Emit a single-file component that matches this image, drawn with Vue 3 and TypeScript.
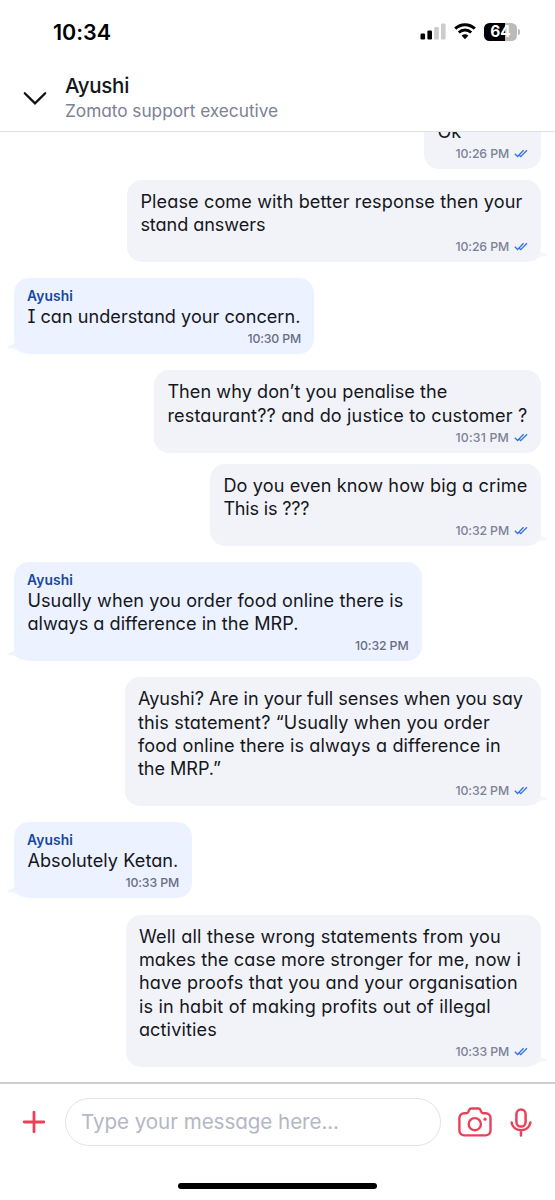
<script setup lang="ts">
import type { Directive } from 'vue'

interface Line { text: string; width: number }
interface Message {
  id: number
  side: 'in' | 'out'
  width: number
  gap: number
  tail: boolean
  time: string
  lines: Line[]
}

const messages: Message[] = [
  { id: 0, side: 'out', width: 117, gap: 0, tail: false, time: '10:26 PM', lines: [{ text: 'Ok', width: 24 }] },
  { id: 1, side: 'out', width: 414, gap: 11, tail: true, time: '10:26 PM', lines: [
    { text: 'Please come with better response then your', width: 382 },
    { text: 'stand answers', width: 125 } ] },
  { id: 2, side: 'in', width: 300, gap: 16, tail: true, time: '10:30 PM', lines: [
    { text: 'I can understand your concern.', width: 273 } ] },
  { id: 3, side: 'out', width: 387, gap: 16.3, tail: false, time: '10:31 PM', lines: [
    { text: 'Then why don’t you penalise the', width: 280 },
    { text: 'restaurant?? and do justice to customer ?', width: 360 } ] },
  { id: 4, side: 'out', width: 331, gap: 11, tail: true, time: '10:32 PM', lines: [
    { text: 'Do you even know how big a crime', width: 304 },
    { text: 'This is ???', width: 86 } ] },
  { id: 5, side: 'in', width: 407.5, gap: 16, tail: true, time: '10:32 PM', lines: [
    { text: 'Usually when you order food online there is', width: 376 },
    { text: 'always a difference in the MRP.', width: 271 } ] },
  { id: 6, side: 'out', width: 416.5, gap: 16.3, tail: true, time: '10:32 PM', lines: [
    { text: 'Ayushi? Are in your full senses when you say', width: 385 },
    { text: 'this statement? “Usually when you order', width: 352 },
    { text: 'food online there is always a difference in', width: 363 },
    { text: 'the MRP.”', width: 83 } ] },
  { id: 7, side: 'in', width: 178, gap: 16, tail: true, time: '10:33 PM', lines: [
    { text: 'Absolutely Ketan.', width: 151 } ] },
  { id: 8, side: 'out', width: 415.5, gap: 16.6, tail: true, time: '10:33 PM', lines: [
    { text: 'Well all these wrong statements from you', width: 362 },
    { text: 'makes the case more stronger for me, now i', width: 382 },
    { text: 'have proofs that you and your organisation', width: 379 },
    { text: 'is in habit of making profits out of illegal', width: 352 },
    { text: 'activities', width: 78 } ] },
]

// Tracks a line of text out or in so that it fills the given width.
const vTrack: Directive<HTMLElement, number> = {
  mounted(el, { value }) {
    const apply = () => {
      el.style.letterSpacing = '0px'
      const count = (el.textContent ?? '').length
      el.style.letterSpacing = `${(value - el.getBoundingClientRect().width) / count}px`
    }
    apply()
    document.fonts.ready.then(apply)
  },
}
</script>

<template>
  <div class="screen">
    <div class="status">
      <span v-track="58" class="clock">10:34</span>
      <div class="indicators">
        <svg width="26" height="17" viewBox="0 0 26 17">
          <rect x="0.5" y="10.5" width="4.6" height="6" rx="1.3" fill="#000" />
          <rect x="7.4" y="7.5" width="4.6" height="9" rx="1.3" fill="#000" />
          <rect x="14.2" y="4" width="4.6" height="12.5" rx="1.3" fill="#ccc" />
          <rect x="21" y="0.5" width="4.6" height="16" rx="1.3" fill="#ccc" />
        </svg>
        <svg class="wifi" width="22" height="17" viewBox="0 0 22 17">
          <g fill="none" stroke="#000" stroke-width="3">
            <path d="M1.2 5.7C6.8 .4 15.2 .4 20.8 5.7" />
            <path d="M4.8 9.5c3.5-3.3 8.9-3.3 12.4 0" />
          </g>
          <path d="M7.6 12.6c2-1.8 4.8-1.8 6.8 0L11 16.2z" fill="#000" />
        </svg>
        <div class="battery"><span>64</span></div>
        <i class="nub" />
      </div>
    </div>

    <header class="header">
      <svg class="chevron" width="24" height="15" viewBox="0 0 24 15">
        <path d="M1.8 2.2 12 12.4 22.2 2.2" fill="none" stroke="#111" stroke-width="2.3" stroke-linecap="round" />
      </svg>
      <div class="who">
        <div class="title"><span v-track="64">Ayushi</span></div>
        <div class="role"><span v-track="213">Zomato support executive</span></div>
      </div>
    </header>

    <main class="chat">
      <div
        v-for="m in messages"
        :key="m.id"
        class="bubble"
        :class="m.side"
        :style="{ width: m.width + 'px', marginTop: m.gap + 'px' }"
      >
        <div v-if="m.side === 'in'" class="name"><span v-track="46">Ayushi</span></div>
        <div v-for="line in m.lines" :key="line.text" class="line">
          <span v-track="line.width">{{ line.text }}</span>
        </div>
        <div class="meta">
          <span v-track="53.5">{{ m.time }}</span>
          <svg v-if="m.side === 'out'" class="ticks" width="14" height="9" viewBox="0 0 14 9">
            <path d="M.8 4.7 3.6 7.5 9.6 1.2M5.5 6.5 6.7 7.6 13 1.2" fill="none" stroke="#3474e0" stroke-width="1.35" />
          </svg>
        </div>
        <svg v-if="m.tail" class="tail" width="24" height="18" viewBox="0 0 24 18">
          <path d="M13 3C13.5 6.5 16.5 8 20.5 9.4Q22 10.8 20 11.2L15 11.8Q11 12.5 8 16L0 12V3Z" />
        </svg>
      </div>
    </main>

    <footer class="composer">
      <svg class="plus" width="24" height="24" viewBox="0 0 24 24">
        <path d="M12 2.2v19.6M2.2 12h19.6" stroke="#ea4158" stroke-width="2.8" stroke-linecap="round" />
      </svg>
      <div class="field"><span v-track="258">Type your message here...</span></div>
      <svg class="camera" width="34" height="30" viewBox="0 0 34 30" fill="none" stroke="#ea4158" stroke-width="2.4">
        <path d="M6.2 6.2h2c1 0 1.8-.5 2.2-1.4l.7-1.7c.4-1 1.1-1.6 2.2-1.6h7c1.1 0 1.8.6 2.2 1.6l.7 1.7c.4.9 1.2 1.4 2.2 1.4h2.3a4.8 4.8 0 0 1 4.8 4.8v12.6a4.8 4.8 0 0 1-4.8 4.8H6.2a4.8 4.8 0 0 1-4.8-4.8V11a4.8 4.8 0 0 1 4.8-4.8Z" />
        <circle cx="16.8" cy="17.2" r="6.1" />
        <circle cx="27" cy="12.2" r="1.6" fill="#ea4158" stroke="none" />
      </svg>
      <svg class="mic" width="22" height="29" viewBox="0 0 22 29" fill="none" stroke="#ea4158" stroke-width="2.5">
        <rect x="6.4" y="1.6" width="9.2" height="17" rx="4.6" />
        <path d="M1.6 14.4c.6 4.6 4.4 7.8 9.4 7.8s8.8-3.2 9.4-7.8M11 22.2v5.2" stroke-linecap="round" />
      </svg>
    </footer>
    <div class="home" />
  </div>
</template>

<style>
body { margin: 0; background: #fff; }
</style>

<style scoped>
.screen {
  width: 555px;
  height: 1200px;
  display: flex;
  flex-direction: column;
  overflow: hidden;
  background: #fff;
  color: #15171c;
  font-family: Inter, "Liberation Sans", sans-serif;
  font-feature-settings: "cv11", "cv08";
  white-space: nowrap;
}
.status {
  height: 64px;
  flex: none;
  box-sizing: border-box;
  padding: 0 35px 1px 53px;
  display: flex;
  align-items: center;
  justify-content: space-between;
}
.clock { font-size: 21.5px; font-weight: 600; color: #000; }
.indicators { display: flex; align-items: center; }
.wifi { margin-left: 8px; }
.battery {
  margin-left: 8px;
  width: 33px;
  height: 18px;
  border-radius: 5.5px;
  background: linear-gradient(90deg, #000 64%, #bbb 64%);
  color: #fff;
  font-size: 15.5px;
  font-weight: 700;
  line-height: 18px;
  text-align: center;
}
.nub { width: 2px; height: 6px; margin-left: 1px; border-radius: 0 2px 2px 0; background: #bbb; }
.header {
  height: 68px;
  flex: none;
  box-sizing: border-box;
  border-bottom: 1px solid #dfe0e8;
  display: flex;
  padding: 8px 0 0 23px;
}
.chevron { margin-top: 19px; }
.who { margin-left: 18px; }
.title { font-size: 20.5px; font-weight: 500; line-height: 27px; }
.role { font-size: 17.3px; line-height: 24px; color: #7c8195; }
.chat {
  position: relative;
  z-index: 0;
  height: 950px;
  flex: none;
  overflow: hidden;
  display: flex;
  flex-direction: column;
  justify-content: flex-end;
  box-sizing: border-box;
  padding: 0 14px 15px;
}
.bubble {
  position: relative;
  flex: none;
  box-sizing: border-box;
  padding: 10px 13px 7.4px;
  border-radius: 15px;
}
.out { align-self: flex-end; background: #f2f3f8; }
.in { align-self: flex-start; background: #ecf2ff; }
.name { height: 17px; line-height: 17px; font-size: 13.8px; font-weight: 600; color: #1846a0; }
.line { height: 23.3px; line-height: 23.3px; font-size: 18.1px; }
.line span { margin-left: 0.4px; }
.meta {
  height: 16px;
  margin-top: 2.3px;
  display: flex;
  align-items: center;
  justify-content: flex-end;
  font-size: 12.3px;
  font-weight: 500;
  color: #7c8195;
}
.in .meta { color: #686d82; }
.ticks { margin-left: 5px; }
.tail { position: absolute; bottom: -1px; right: -9px; fill: #f5f6fa; z-index: -1; }
.in .tail { right: auto; left: -9px; transform: scaleX(-1); fill: #eff4ff; }
.composer {
  height: 78px;
  flex: none;
  box-sizing: border-box;
  border-top: 2px solid #ceced2;
  display: flex;
  align-items: center;
  padding: 0 23px 0 22px;
}
.field {
  width: 376px;
  height: 48px;
  margin-left: 19px;
  box-sizing: border-box;
  border: 1px solid #e3e4ec;
  border-radius: 24px;
  padding-left: 15px;
  line-height: 46px;
  font-size: 20.6px;
  color: #b4b7c5;
}
.camera { margin-left: 17px; }
.mic { margin-left: auto; }
.home { width: 199px; height: 6px; flex: none; margin: 23px auto 0; border-radius: 3px; background: #000; }
</style>
